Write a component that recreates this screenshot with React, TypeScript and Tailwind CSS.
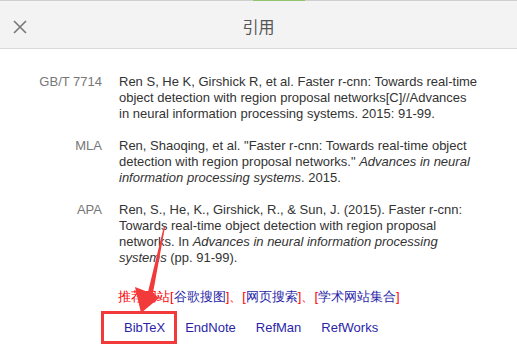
import React from "react";

const font = { fontFamily: '"Liberation Sans", Arial, sans-serif' };

function Row({ label, children }: { label: string; children: React.ReactNode }) {
  return (
    <div className="flex">
      <div className="w-[82px] shrink-0 text-right text-[#777]">{label}</div>
      <div className="ml-[17px] w-[359px] text-[#333]">{children}</div>
    </div>
  );
}

export default function App() {
  return (
    <div className="relative w-[517px] h-[358px] bg-white overflow-hidden text-[13px] leading-[16px]" style={font}>
      <div className="h-[1px] bg-[#cfcfcf] relative">
        <div className="absolute left-[253px] top-0 w-[52px] h-[1px] bg-[#8fc46a]" />
      </div>
      <div className="relative h-[48px] bg-[#f3f3f3] border-b border-[#dadada] flex items-center justify-center">
        <svg className="absolute left-[13px] top-[19px]" width="14" height="14" viewBox="0 0 14 14">
          <path d="M1 1 L13 13 M13 1 L1 13" stroke="#777" strokeWidth="1.6" />
        </svg>
        <span className="text-[16px] text-[#555] mt-[2px]" style={{ fontFamily: '"Noto Sans CJK SC", sans-serif' }}>引用</span>
      </div>
      <div className="pl-[20px] pt-[25px] flex flex-col gap-[16px]">
        <Row label="GB/T 7714">
          Ren S, He K, Girshick R, et al. Faster r-cnn: Towards real-time object detection with region proposal networks[C]//Advances in neural information processing systems. 2015: 91-99.
        </Row>
        <Row label="MLA">
          Ren, Shaoqing, et al. "Faster r-cnn: Towards real-time object detection with region proposal networks." <i>Advances in neural information processing systems</i>. 2015.
        </Row>
        <Row label="APA">
          Ren, S., He, K., Girshick, R., &amp; Sun, J. (2015). Faster r-cnn: Towards real-time object detection with region proposal networks. In <i>Advances in neural information processing systems</i> (pp. 91-99).
        </Row>
      </div>
      <div className="pl-[118px] mt-[23px] text-[#f00]">
        推荐网站[<span className="text-[#2b1fa8]">谷歌搜图</span>]、[<span className="text-[#2b1fa8]">网页搜索</span>]、[<span className="text-[#2b1fa8]">学术网站集合</span>]
      </div>
      <div className="pl-[124px] mt-[15px] flex gap-[20px] text-[#2b1fa8]">
        <span>BibTeX</span>
        <span>EndNote</span>
        <span>RefMan</span>
        <span>RefWorks</span>
      </div>
      <div className="absolute left-[101px] top-[311px] w-[76px] h-[33px] border-[3px] border-[#f23a3a]" />
      <svg className="absolute left-0 top-0 pointer-events-none" width="517" height="358">
        <polygon points="164,226 165,227 153,293 159,298 141,313 135,287 148,292" fill="#f23a3a" />
      </svg>
    </div>
  );
}
